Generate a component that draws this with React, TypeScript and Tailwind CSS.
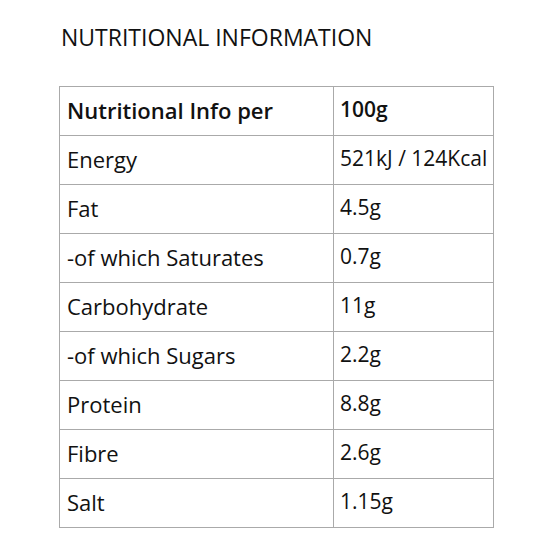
const rows = [
  ["Energy", "521kJ / 124Kcal"],
  ["Fat", "4.5g"],
  ["-of which Saturates", "0.7g"],
  ["Carbohydrate", "11g"],
  ["-of which Sugars", "2.2g"],
  ["Protein", "8.8g"],
  ["Fibre", "2.6g"],
  ["Salt", "1.15g"],
] as const;

export default function App() {
  return (
    <main className="min-h-[560px] bg-white pl-[59px] pt-[23px] font-['Open_Sans','Lato',sans-serif] text-[#111]">
      <h2 className="pl-[2px] text-[23px] leading-[28px]">NUTRITIONAL INFORMATION</h2>
      <table className="mt-[35px] w-[435px] table-fixed border-collapse">
        <tbody>
          <tr className="h-[49px]">
            <th className="w-[274px] border border-[#aaa] px-[7px] pb-[2px] text-left text-[22px] font-semibold">Nutritional Info per</th>
            <th className="border border-[#aaa] px-[6px] pb-[2px] text-left text-[21px] font-semibold">100g</th>
          </tr>
          {rows.map(([label, value]) => (
            <tr key={label} className="h-[49px]">
              <td className="border border-[#aaa] px-[7px] pb-[2px] text-[22px]">{label}</td>
              <td className="whitespace-nowrap border border-[#aaa] px-[6px] pb-[2px] text-[21px]">{value}</td>
            </tr>
          ))}
        </tbody>
      </table>
    </main>
  );
}
